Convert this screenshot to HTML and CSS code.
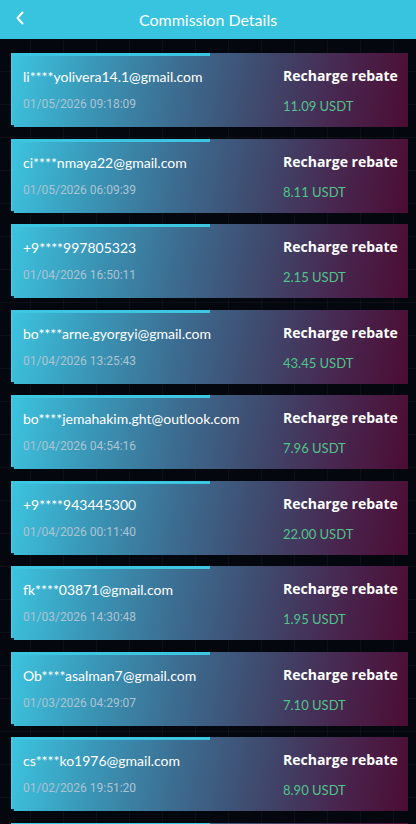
FILE: index.html
```html
<!DOCTYPE html>
<html lang="en">
<head>
<meta charset="utf-8">
<title>Commission Details</title>
<link rel="stylesheet" href="styles.css">
</head>
<body>
<header class="topbar">
  <span class="back"><svg width="10" height="14" viewBox="0 0 10 14"><path d="M7.5 1.5 L2.5 7 L7.5 12.5" fill="none" stroke="#fff" stroke-width="2" stroke-linecap="round" stroke-linejoin="round"/></svg></span>
  <h1 class="title">Commission Details</h1>
</header>
<main class="list">
  <div class="card"><div class="col left"><div class="email">li****yolivera14.1@gmail.com</div><div class="date">01/05/2026 09:18:09</div></div><div class="col right"><div class="type">Recharge rebate</div><div class="amount">11.09 USDT</div></div></div>
  <div class="card"><div class="col left"><div class="email">ci****nmaya22@gmail.com</div><div class="date">01/05/2026 06:09:39</div></div><div class="col right"><div class="type">Recharge rebate</div><div class="amount">8.11 USDT</div></div></div>
  <div class="card"><div class="col left"><div class="email">+9****997805323</div><div class="date">01/04/2026 16:50:11</div></div><div class="col right"><div class="type">Recharge rebate</div><div class="amount">2.15 USDT</div></div></div>
  <div class="card"><div class="col left"><div class="email">bo****arne.gyorgyi@gmail.com</div><div class="date">01/04/2026 13:25:43</div></div><div class="col right"><div class="type">Recharge rebate</div><div class="amount">43.45 USDT</div></div></div>
  <div class="card"><div class="col left"><div class="email">bo****jemahakim.ght@outlook.com</div><div class="date">01/04/2026 04:54:16</div></div><div class="col right"><div class="type">Recharge rebate</div><div class="amount">7.96 USDT</div></div></div>
  <div class="card"><div class="col left"><div class="email">+9****943445300</div><div class="date">01/04/2026 00:11:40</div></div><div class="col right"><div class="type">Recharge rebate</div><div class="amount">22.00 USDT</div></div></div>
  <div class="card"><div class="col left"><div class="email">fk****03871@gmail.com</div><div class="date">01/03/2026 14:30:48</div></div><div class="col right"><div class="type">Recharge rebate</div><div class="amount">1.95 USDT</div></div></div>
  <div class="card"><div class="col left"><div class="email">Ob****asalman7@gmail.com</div><div class="date">01/03/2026 04:29:07</div></div><div class="col right"><div class="type">Recharge rebate</div><div class="amount">7.10 USDT</div></div></div>
  <div class="card"><div class="col left"><div class="email">cs****ko1976@gmail.com</div><div class="date">01/02/2026 19:51:20</div></div><div class="col right"><div class="type">Recharge rebate</div><div class="amount">8.90 USDT</div></div></div>
  <div class="card"><div class="col left"><div class="email">&nbsp;</div><div class="date">&nbsp;</div></div><div class="col right"><div class="type">&nbsp;</div><div class="amount">&nbsp;</div></div></div>
</main>
</body>
</html>
```
FILE: styles.css
```css
html, body { margin: 0; padding: 0; }
body {
  width: 416px;
  height: 824px;
  overflow: hidden;
  font-family: "Lato", "Noto Sans", sans-serif;
  background-color: #05070f;
  background-image:
    linear-gradient(90deg, rgba(255,255,255,0.035) 1px, transparent 1px),
    linear-gradient(0deg, rgba(255,255,255,0.035) 1px, transparent 1px);
  background-size: 33px 33px;
  background-position: -3px 6px;
}
.topbar {
  height: 39px;
  background: #38c3df;
  display: flex;
  align-items: center;
  justify-content: center;
  position: relative;
}
.back {
  position: absolute;
  left: 15px;
  top: 11px;
  display: flex;
}
.title {
  margin: 0;
  font-size: 16px;
  font-weight: 400;
  color: #fff;
}
.list {
  display: flex;
  flex-direction: column;
  gap: 11.5px;
  padding: 14px 8px 0 11px;
}
.card {
  position: relative;
  height: 74px;
  box-sizing: border-box;
  display: flex;
  justify-content: space-between;
  padding: 12px 11px 0 11px;
  background: linear-gradient(100deg, #3cc4df 0%, #3a98b9 20%, #3c6c90 42%, #3f4a6e 62%, #48264f 82%, #4c0c33 100%);
  border-left: 1px solid #4fd0ea;
  flex-shrink: 0;
}
.card::before {
  content: "";
  position: absolute;
  left: -1px;
  top: 0;
  width: 199px;
  height: 3px;
  background: #3cc6e2;
}
.card::after {
  content: "";
  position: absolute;
  left: -1px;
  bottom: 0;
  width: 3px;
  height: 2px;
  background: #0a1a26;
}
.col { display: flex; flex-direction: column; }
.right { width: 114px; }
.email {
  font-size: 14px;
  color: #fff;
  line-height: 24px;
}
.date {
  font-family: "Roboto", "Noto Sans", sans-serif;
  font-size: 12px;
  color: #adc3d2;
  line-height: 20px;
  margin-top: 5px;
}
.type {
  font-family: "Open Sans", "Noto Sans", sans-serif;
  font-size: 14px;
  font-weight: 700;
  color: #fff;
  line-height: 22px;
  white-space: nowrap;
}
.amount {
  font-size: 13px;
  color: #4fc58a;
  line-height: 20px;
  margin-top: 9px;
}
```
